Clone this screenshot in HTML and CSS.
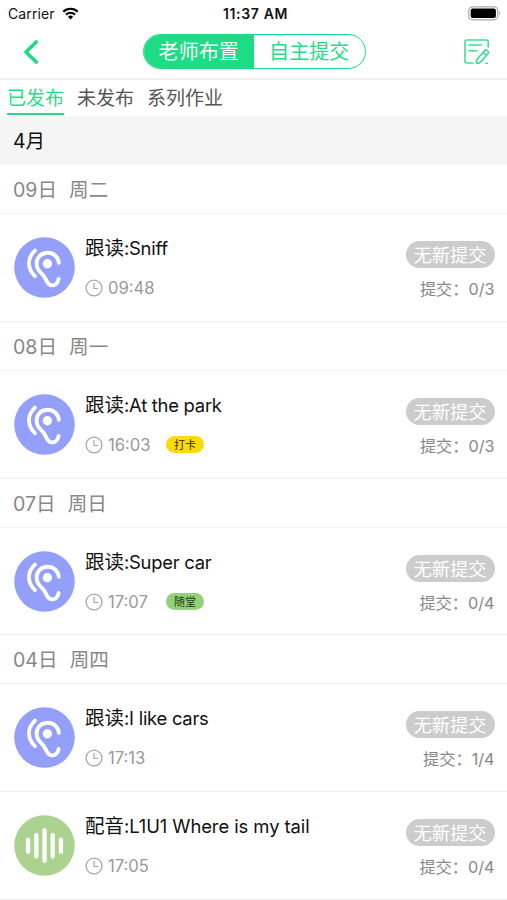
FILE: index.html
```html
<!DOCTYPE html>
<html lang="zh-CN">
<head>
<meta charset="utf-8">
<title>作业</title>
<link rel="stylesheet" href="styles.css">
</head>
<body>
<svg width="0" height="0" class="defs">
  <symbol id="ear" viewBox="0 0 62 62">
    <circle cx="31" cy="31" r="30.8" fill="#949ffa"/>
    <g fill="none" stroke="#fff" stroke-width="3.9" stroke-linecap="round" stroke-linejoin="round">
      <path d="M21.300 13.800Q15.200 19.500 15.200 26.500Q15.200 34 21.300 39.800"/>
      <path d="M45.600 26.200C44.800 20 40 16 34.300 16C27.500 16 23 21 23 27C23 31.500 25 34.500 28 37C31.500 40 31.800 42.500 33.500 45.500C36 50 40 49.800 42.500 48Q45 46 45.400 42.500"/>
    </g>
    <circle cx="33.900" cy="27.200" r="4.800" fill="#fff"/>
  </symbol>
  <symbol id="wave" viewBox="0 0 62 62">
    <circle cx="31" cy="31" r="30.8" fill="#acd28f"/>
    <path d="M14.300 25v12.500M22.700 20.300v22M31 15.500v31M39.300 20.300v22M47.700 25v12.500" fill="none" stroke="#fff" stroke-width="4.400" stroke-linecap="round"/>
  </symbol>
  <symbol id="clock" viewBox="0 0 18 18">
    <circle cx="9" cy="9" r="7.900" fill="none" stroke="#a6a6a6" stroke-width="1.300"/>
    <path d="M9 4v5.500h4.200" fill="none" stroke="#a6a6a6" stroke-width="1.200"/>
  </symbol>
</svg>

<header class="status">
  <div class="carrier"><span>Carrier</span>
    <svg class="wifi" viewBox="0 0 17 13"><path d="M1.300 4.700a10.300 10.300 0 0 1 14.400 0M4 7.600a6.400 6.400 0 0 1 9 0" fill="none" stroke="#000" stroke-width="2.200"/><path d="M5.900 9.700a3.700 3.700 0 0 1 5.200 0L8.500 12.500z"/></svg>
  </div>
  <div class="clock-time">11:37 AM</div>
  <svg class="battery" viewBox="0 0 33 15"><rect x=".8" y=".8" width="29" height="13" rx="3.800" fill="#fff" stroke="#aaa" stroke-width="1.200"/><rect x="2.700" y="2.600" width="25.200" height="9.400" rx="2"/><path d="M31 5.200q2 2 0 4.200z" fill="#999"/></svg>
</header>

<nav class="nav">
  <svg class="back" viewBox="0 0 16 24"><path d="M13.300 2L3 12l10.300 10" fill="none" stroke="#1cdc84" stroke-width="3.600" stroke-linejoin="round" stroke-linecap="round"/></svg>
  <div class="segment"><div class="seg on">老师布置</div><div class="seg">自主提交</div></div>
  <svg class="edit" viewBox="0 0 26 26" fill="none" stroke="#3fdc98" stroke-width="1.600" stroke-linecap="round" stroke-linejoin="round"><path d="M24.200 8V3q0-2-2-2H3Q1 1 1 3v19q0 2 2 2h6"/><path d="M5 6h12.500M5 11.800h8"/><path d="M20.800 11.500q1.200-1.200 2.400 0l.8.800q1.100 1.200 0 2.400L17 22.600q-1.800 2-4.300 1.600-.7-2.800 1.200-4.800zM19.300 13.300l3.300 3M22 24.200h1.500"/></svg>
</nav>

<div class="tabs"><div class="tab on">已发布</div><div class="tab">未发布</div><div class="tab">系列作业</div></div>
<div class="month">4月</div>

<main>
  <div class="date"><span>09日</span><span>周二</span></div>
  <section class="item">
    <svg class="icon"><use href="#ear"/></svg>
    <div class="info"><h2>跟读<span>:Sniff</span></h2><div class="meta"><svg><use href="#clock"/></svg><time>09:48</time></div></div>
    <div class="side"><div class="pill">无新提交</div><div class="count">提交：<span>0/3</span></div></div>
  </section>
  <div class="date"><span>08日</span><span>周一</span></div>
  <section class="item">
    <svg class="icon"><use href="#ear"/></svg>
    <div class="info"><h2>跟读<span>:At the park</span></h2><div class="meta"><svg><use href="#clock"/></svg><time>16:03</time><b class="tag yellow">打卡</b></div></div>
    <div class="side"><div class="pill">无新提交</div><div class="count">提交：<span>0/3</span></div></div>
  </section>
  <div class="date"><span>07日</span><span>周日</span></div>
  <section class="item">
    <svg class="icon"><use href="#ear"/></svg>
    <div class="info"><h2>跟读<span>:Super car</span></h2><div class="meta"><svg><use href="#clock"/></svg><time>17:07</time><b class="tag green">随堂</b></div></div>
    <div class="side"><div class="pill">无新提交</div><div class="count">提交：<span>0/4</span></div></div>
  </section>
  <div class="date"><span>04日</span><span>周四</span></div>
  <section class="item">
    <svg class="icon"><use href="#ear"/></svg>
    <div class="info"><h2>跟读<span>:I like cars</span></h2><div class="meta"><svg><use href="#clock"/></svg><time>17:13</time></div></div>
    <div class="side"><div class="pill">无新提交</div><div class="count">提交：<span>1/4</span></div></div>
  </section>
  <section class="item">
    <svg class="icon"><use href="#wave"/></svg>
    <div class="info"><h2>配音<span class="long">:L1U1 Where is my tail</span></h2><div class="meta"><svg><use href="#clock"/></svg><time>17:05</time></div></div>
    <div class="side"><div class="pill">无新提交</div><div class="count">提交：<span>0/4</span></div></div>
  </section>
</main>
</body>
</html>
```
FILE: styles.css
```css
* { box-sizing: border-box; }
html { overflow: hidden; }
body {
  margin: 0;
  width: 507px;
  height: 900px;
  overflow: hidden;
  background: #fff;
  color: #111;
  font-family: Inter, "Noto Sans CJK SC", sans-serif;
}
.defs { display: block; height: 0; }
svg { flex: none; }

.status {
  display: grid;
  grid-template-columns: 1fr auto 1fr;
  align-items: center;
  height: 27px;
  padding: 0 6px 0 8px;
  font-size: 14px;
  line-height: 27px;
}
.carrier { display: flex; align-items: center; gap: 7px; letter-spacing: 0.1px; }
.wifi { width: 17px; height: 13px; }
.clock-time { font-weight: 600; letter-spacing: 0.65px; padding-left: 2px; }
.battery { justify-self: end; width: 33px; height: 15px; }

.nav {
  display: flex;
  align-items: center;
  justify-content: space-between;
  height: 53px;
  padding: 0 17px 2px 23px;
  border-bottom: 2px solid #eee;
}
.back { width: 16px; height: 24px; }
.segment {
  display: flex;
  width: 223px;
  height: 35px;
  margin-left: 5px;
  border: 1px solid #1cdc84;
  border-radius: 18px;
  overflow: hidden;
}
.seg {
  flex: 1;
  font-size: 20.1px;
  line-height: 35px;
  text-align: center;
  color: #25dd89;
}
.seg.on { background: #1cdc84; color: #fff; }
.edit { width: 26px; height: 26px; }

.tabs { display: flex; height: 36px; padding-left: 7px; gap: 13px; }
.tab {
  height: 35px;
  font-size: 19px;
  line-height: 37px;
  color: #555;
  border-bottom: 2px solid transparent;
}
.tab.on { color: #25dd89; border-color: #25dd89; }

.month {
  height: 49px;
  padding-left: 13px;
  background: #f5f5f5;
  font-size: 19.5px;
  line-height: 50px;
}

.date {
  display: flex;
  gap: 12px;
  height: 49.1px;
  padding-left: 13px;
  border-bottom: 1px solid #f3f3f3;
  color: #888;
  font-size: 19.6px;
  line-height: 50px;
}
.item {
  display: flex;
  height: 107.7px;
  padding: 0 12.5px 0 14px;
  border-bottom: 1px solid #eee;
}
.icon { width: 61px; height: 61px; margin-top: 23px; }
.info { flex: 1; margin-left: 10px; padding-top: 20px; }
h2 { margin: 0; font-size: 19.5px; line-height: 29px; font-weight: 400; color: #111; white-space: nowrap; }
h2 span { font-size: 18.4px; letter-spacing: -0.25px; }
h2 .long { letter-spacing: -0.06px; }
.meta { display: flex; align-items: center; height: 24px; margin-top: 13px; }
.meta svg { width: 18px; height: 18px; }
time { width: 58px; margin-left: 5px; font-size: 16.6px; line-height: 24px; color: #999; }
.tag {
  width: 38px;
  height: 17px;
  border-radius: 9px;
  font-size: 11px;
  line-height: 18px;
  font-weight: 400;
  text-align: center;
  color: #332d00;
}
.yellow { background: #fbdb0c; }
.green { background: #91d376; color: #24381c; }
.side { display: flex; flex-direction: column; align-items: flex-end; padding-top: 27px; }
.pill {
  width: 89px;
  height: 27px;
  border-radius: 14px;
  background: #ccc;
  color: #fff;
  font-size: 18.3px;
  line-height: 28px;
  text-align: center;
}
.count { margin-top: 9px; font-size: 16.2px; line-height: 25px; color: #888; white-space: nowrap; }
```
